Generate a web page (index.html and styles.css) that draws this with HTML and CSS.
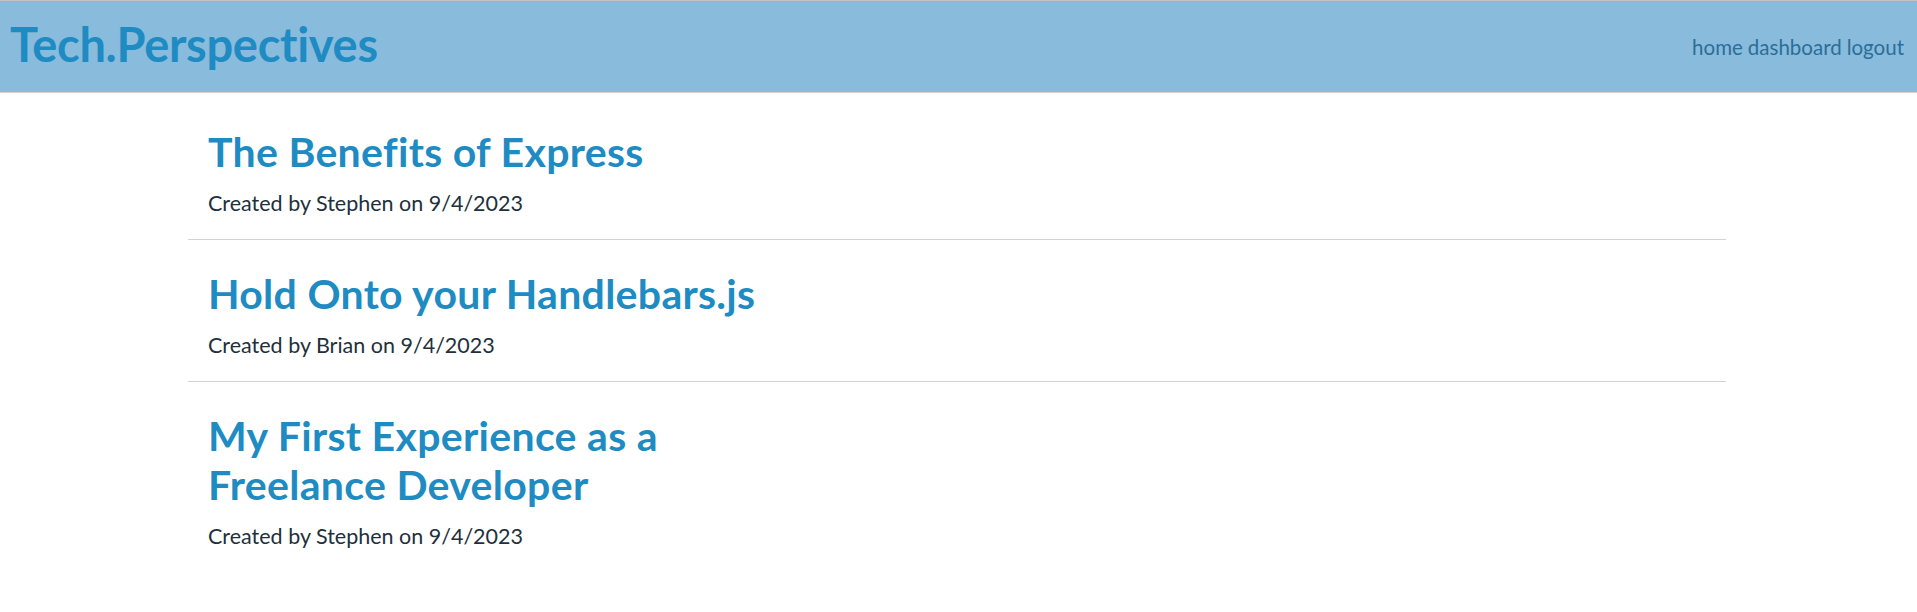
FILE: index.html
```html
<!DOCTYPE html>
<html lang="en">
<head>
<meta charset="utf-8">
<title>Tech.Perspectives</title>
<link rel="stylesheet" href="styles.css">
</head>
<body>
<header class="site-header">
  <a class="logo" href="#">Tech.Perspectives</a>
  <nav class="nav">
    <a href="#">home</a>
    <a href="#">dashboard</a>
    <a href="#">logout</a>
  </nav>
</header>
<main class="posts">
  <article class="post">
    <h2 class="post-title">The Benefits of Express</h2>
    <p class="post-meta">Created by Stephen on 9/4/2023</p>
  </article>
  <article class="post">
    <h2 class="post-title">Hold Onto your Handlebars.js</h2>
    <p class="post-meta">Created by Brian on 9/4/2023</p>
  </article>
  <article class="post">
    <h2 class="post-title">My First Experience as a Freelance Developer</h2>
    <p class="post-meta">Created by Stephen on 9/4/2023</p>
  </article>
</main>
</body>
</html>
```
FILE: styles.css
```css
* { box-sizing: border-box; }

body {
  margin: 0;
  font-family: "Lato", "Open Sans", sans-serif;
  background: #ffffff;
  color: #1f2a36;
}

a { text-decoration: none; }

.site-header {
  display: flex;
  justify-content: space-between;
  align-items: flex-start;
  height: 93px;
  padding: 15px 13px 0 10px;
  background: #89bbdc;
  border-top: 1px solid #c2c2c2;
  border-bottom: 1px solid #d4d4d4;
}

.logo {
  font-size: 47px;
  line-height: 56px;
  font-weight: 700;
  letter-spacing: -0.3px;
  color: #1e8bc3;
}

.nav {
  display: flex;
  gap: 5px;
  margin-top: 19px;
  font-size: 20.5px;
  line-height: 24px;
}

.nav a { color: #2b6e99; }

.posts {
  width: 1538px;
  margin-left: 188px;
  padding-top: 5px;
}

.post {
  padding: 29px 20px 24px;
  border-bottom: 1px solid #d3d3d3;
}

.post:last-child { border-bottom: none; }

.post-title {
  max-width: 600px;
  margin: 0 0 15px;
  font-size: 41px;
  line-height: 49px;
  font-weight: 700;
  letter-spacing: 0.3px;
  color: #1e8bc3;
}

.post-meta {
  margin: 0;
  font-size: 21.5px;
  line-height: 24px;
  color: #22303c;
}
```
